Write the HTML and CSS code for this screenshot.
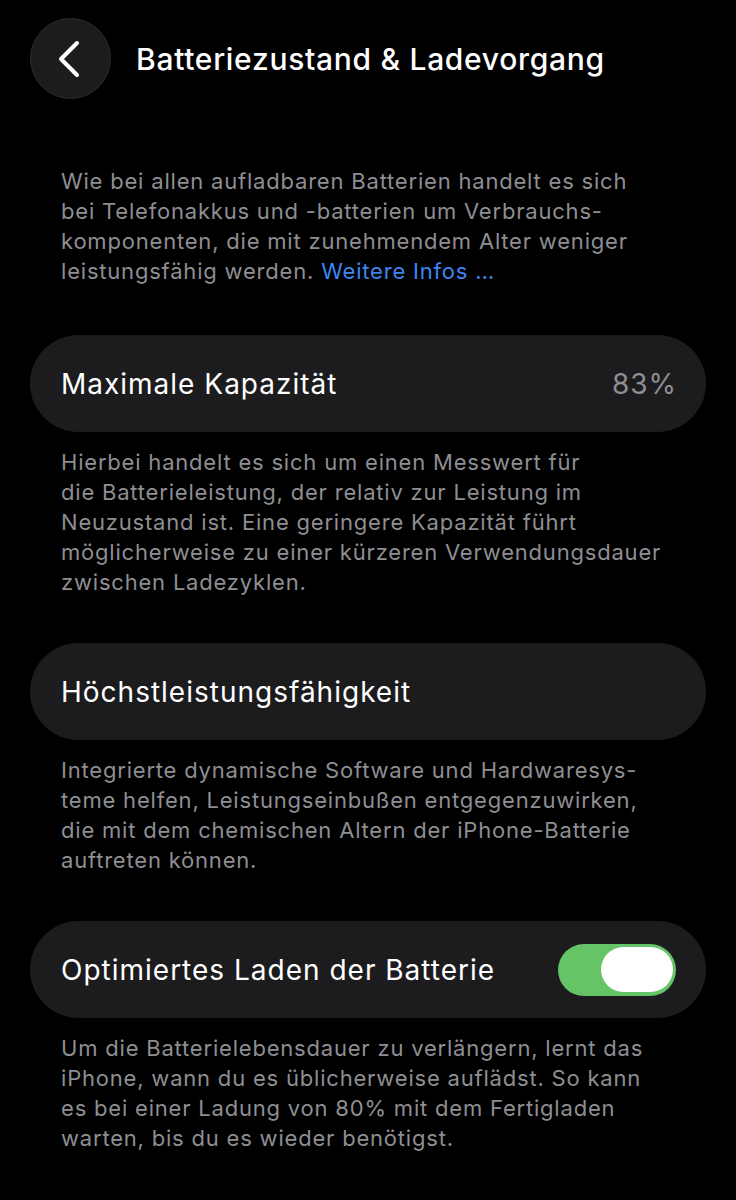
FILE: index.html
```html
<!DOCTYPE html>
<html lang="de">
<head>
<meta charset="utf-8">
<link rel="stylesheet" href="styles.css">
</head>
<body>
<div class="screen">
  <header class="nav">
    <button class="back" aria-label="Zurück">
      <svg width="28" height="40" viewBox="0 0 28 40"><path d="M22 4 L6 20 L22 36" fill="none" stroke="#fff" stroke-width="4" stroke-linecap="round" stroke-linejoin="round"/></svg>
    </button>
    <h1 class="title">Batteriezustand &amp; Ladevorgang</h1>
  </header>

  <p class="note first">Wie bei allen aufladbaren Batterien handelt es sich<br>bei Telefonakkus und -batterien um Verbrauchs-<br>komponenten, die mit zunehmendem Alter weniger<br>leistungsfähig werden. <span class="link">Weitere Infos …</span></p>

  <div class="card">
    <span class="label">Maximale Kapazität</span>
    <span class="value">83%</span>
  </div>
  <p class="note">Hierbei handelt es sich um einen Messwert für<br>die Batterieleistung, der relativ zur Leistung im<br>Neuzustand ist. Eine geringere Kapazität führt<br>möglicherweise zu einer kürzeren Verwendungsdauer<br>zwischen Ladezyklen.</p>

  <div class="card">
    <span class="label">Höchstleistungsfähigkeit</span>
  </div>
  <p class="note">Integrierte dynamische Software und Hardwaresys-<br>teme helfen, Leistungseinbußen entgegenzuwirken,<br>die mit dem chemischen Altern der iPhone-Batterie<br>auftreten können.</p>

  <div class="card">
    <span class="label">Optimiertes Laden der Batterie</span>
    <span class="toggle"><span class="knob"></span></span>
  </div>
  <p class="note">Um die Batterielebensdauer zu verlängern, lernt das<br>iPhone, wann du es üblicherweise auflädst. So kann<br>es bei einer Ladung von 80% mit dem Fertigladen<br>warten, bis du es wieder benötigst.</p>
</div>
</body>
</html>
```
FILE: styles.css
```css
* { box-sizing: border-box; }
html, body { margin: 0; padding: 0; background: #000; }
body {
  font-family: Inter, Roboto, "Liberation Sans", sans-serif;
  color: #fff;
  width: 736px;
  height: 1200px;
  overflow: hidden;
}
.screen { padding: 18px 30px 0 30px; }
.nav {
  display: flex;
  align-items: center;
  height: 81px;
}
.back {
  width: 81px;
  height: 81px;
  border-radius: 50%;
  background: #1c1c1e;
  border: 1px solid #2c2c2e;
  display: flex;
  align-items: center;
  justify-content: center;
  padding: 0 4px 0 0;
  margin: 0;
}
.title {
  margin: 0 0 0 25px;
  font-size: 30px;
  font-weight: 500;
  letter-spacing: 0.7px;
  color: #fff;
}
.note {
  margin: 15px 0 46px 0;
  padding: 0 31px;
  font-size: 22px;
  line-height: 30px;
  letter-spacing: 0.8px;
  color: #8e8e93;
  font-weight: 400;
}
.note.first { margin-top: 67px; margin-bottom: 49px; }
.link { color: #3d86f0; }
.card {
  display: flex;
  align-items: center;
  justify-content: space-between;
  height: 97px;
  border-radius: 49px;
  background: #1c1c1e;
  padding: 0 32px 0 31px;
}
.label { font-size: 28px; letter-spacing: 1px; color: #fff; }
.value { font-size: 28px; letter-spacing: 1px; margin-right: -3px; color: #8e8e93; }
.toggle {
  width: 118px;
  height: 52px;
  border-radius: 26px;
  background: #65c466;
  display: flex;
  align-items: center;
  justify-content: flex-end;
  padding: 0 3px;
  margin-right: -2px;
}
.knob {
  width: 72px;
  height: 45px;
  border-radius: 23px;
  background: #fff;
}
```
